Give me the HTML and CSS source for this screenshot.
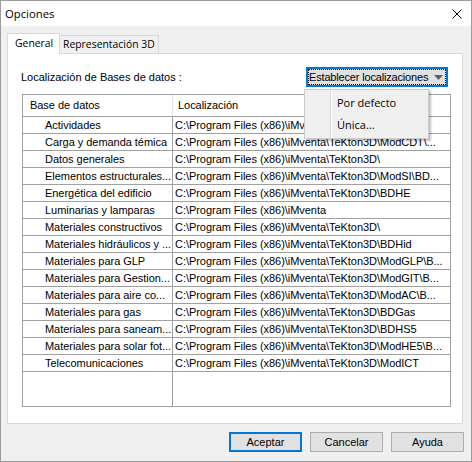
FILE: index.html
```html
<!DOCTYPE html>
<html>
<head>
<meta charset="utf-8">
<title>Opciones</title>
<link rel="stylesheet" href="styles.css">
</head>
<body>
<div class="window">
  <div class="titlebar">
    <span class="title">Opciones</span>
    <svg class="close" width="10" height="10" viewBox="0 0 10 10"><path d="M0.5 0.5 L9.5 9.5 M9.5 0.5 L0.5 9.5" stroke="#000" stroke-width="1" fill="none"/></svg>
  </div>
  <div class="client">
    <div class="tabs">
      <div class="tab active">General</div>
      <div class="tab">Representación 3D</div>
    </div>
    <div class="panel">
      <div class="toprow">
        <span class="label">Localización de Bases de datos :</span>
        <div class="dropbtn">
          <div class="focus">
            <span class="droptext">Establecer localizaciones</span>
            <svg class="arrow" width="9" height="5" viewBox="0 0 9 5"><path d="M0 0 H9 L4.5 5 Z" fill="#606060"/></svg>
          </div>
        </div>
      </div>
      <div class="list">
        <div class="row head"><div class="c1">Base de datos</div><div class="c2">Localización</div></div>
        <div class="row"><div class="c1">Actividades</div><div class="c2">C:\Program Files (x86)\iMventa</div></div>
        <div class="row"><div class="c1">Carga y demanda témica</div><div class="c2">C:\Program Files (x86)\iMventa\TeKton3D\ModCDT\...</div></div>
        <div class="row"><div class="c1">Datos generales</div><div class="c2">C:\Program Files (x86)\iMventa\TeKton3D\</div></div>
        <div class="row"><div class="c1">Elementos estructurales...</div><div class="c2">C:\Program Files (x86)\iMventa\TeKton3D\ModSI\BD...</div></div>
        <div class="row"><div class="c1">Energética del edificio</div><div class="c2">C:\Program Files (x86)\iMventa\TeKton3D\BDHE</div></div>
        <div class="row"><div class="c1">Luminarias y lamparas</div><div class="c2">C:\Program Files (x86)\iMventa</div></div>
        <div class="row"><div class="c1">Materiales constructivos</div><div class="c2">C:\Program Files (x86)\iMventa\TeKton3D\</div></div>
        <div class="row"><div class="c1">Materiales hidráulicos y ...</div><div class="c2">C:\Program Files (x86)\iMventa\TeKton3D\BDHid</div></div>
        <div class="row"><div class="c1">Materiales para GLP</div><div class="c2">C:\Program Files (x86)\iMventa\TeKton3D\ModGLP\B...</div></div>
        <div class="row"><div class="c1">Materiales para Gestion...</div><div class="c2">C:\Program Files (x86)\iMventa\TeKton3D\ModGIT\B...</div></div>
        <div class="row"><div class="c1">Materiales para aire co...</div><div class="c2">C:\Program Files (x86)\iMventa\TeKton3D\ModAC\B...</div></div>
        <div class="row"><div class="c1">Materiales para gas</div><div class="c2">C:\Program Files (x86)\iMventa\TeKton3D\BDGas</div></div>
        <div class="row"><div class="c1">Materiales para saneam...</div><div class="c2">C:\Program Files (x86)\iMventa\TeKton3D\BDHS5</div></div>
        <div class="row"><div class="c1">Materiales para solar fot...</div><div class="c2">C:\Program Files (x86)\iMventa\TeKton3D\ModHE5\B...</div></div>
        <div class="row"><div class="c1">Telecomunicaciones</div><div class="c2">C:\Program Files (x86)\iMventa\TeKton3D\ModICT</div></div>
        <div class="filler"><div class="c1"></div><div class="c2"></div></div>
      </div>
      <div class="menu">
        <div class="menu-item">Por defecto</div>
        <div class="menu-item">Única...</div>
      </div>
    </div>
    <div class="buttons">
      <div class="btn default">Aceptar</div>
      <div class="btn">Cancelar</div>
      <div class="btn">Ayuda</div>
    </div>
  </div>
</div>
</body>
</html>
```
FILE: styles.css
```css
html, body {
  margin: 0;
  padding: 0;
  background: #f0f0f0;
}

.window {
  width: 472px;
  height: 462px;
  box-sizing: border-box;
  border: 1px solid #9b9b9b;
  display: flex;
  flex-direction: column;
  background: #f0f0f0;
  font-family: "Liberation Sans", Arial, sans-serif;
  font-size: 11px;
  color: #000;
}

.titlebar {
  flex: none;
  height: 25px;
  background: #fff;
  display: flex;
  align-items: center;
  justify-content: space-between;
  padding: 0 9px 0 4px;
}

.title {
  font-family: "Open Sans", "Noto Sans", sans-serif;
  font-size: 11.3px;
  color: #000;
}

.close {
  display: block;
}

.client {
  flex: 1;
  display: flex;
  flex-direction: column;
  padding: 7px 8px 0 6px;
}

.tabs {
  display: flex;
  align-items: flex-end;
  height: 21px;
}

.tab {
  box-sizing: border-box;
  height: 18px;
  margin-bottom: 1px;
  margin-left: -1px;
  width: 100px;
  border: 1px solid #d9d9d9;
  border-bottom: none;
  background: #f0f0f0;
  padding-left: 3px;
  font-family: "Open Sans", "Noto Sans", sans-serif;
  font-size: 10.4px;
  line-height: 16px;
  white-space: nowrap;
}

.tab.active {
  height: 21px;
  margin-bottom: 0;
  margin-left: 0;
  width: 53px;
  background: #fff;
  padding-left: 7px;
  line-height: 19px;
  position: relative;
  z-index: 1;
}

.panel {
  height: 371px;
  box-sizing: border-box;
  border: 1px solid #d9d9d9;
  background: #fff;
  margin-top: -1px;
  position: relative;
  display: flex;
  flex-direction: column;
  padding: 13px 11px 0 14px;
}

.toprow {
  display: flex;
  align-items: center;
  justify-content: space-between;
  height: 20px;
}

.label {
  margin-left: -1px;
}

.dropbtn {
  width: 142px;
  height: 20px;
  box-sizing: border-box;
  border: 2px solid #0078d7;
  background: #e1e1e1;
  margin-right: 3px;
}

.focus {
  height: 100%;
  box-sizing: border-box;
  border: 1px dotted #000;
  display: flex;
  align-items: center;
  justify-content: space-between;
  padding: 0 2px 0 0;
  white-space: nowrap;
}

.droptext {
  letter-spacing: -0.17px;
}

.arrow {
  display: block;
}

.list {
  margin-top: 7px;
  height: 313px;
  box-sizing: border-box;
  border: 1px solid #a0a0a0;
  display: flex;
  flex-direction: column;
  letter-spacing: -0.04px;
}

.row {
  display: flex;
  flex: none;
  height: 17px;
  box-sizing: border-box;
  border-bottom: 1px solid #a0a0a0;
  line-height: 16px;
}

.row.head {
  height: 22px;
  line-height: 21px;
}

.c1 {
  width: 150px;
  flex: none;
  box-sizing: border-box;
  border-right: 1px solid #a0a0a0;
  padding-left: 22px;
  white-space: nowrap;
  overflow: hidden;
}

.c2 {
  flex: 1;
  padding-left: 2px;
  white-space: nowrap;
  overflow: hidden;
}

.head .c1 {
  padding-left: 7px;
  border-right-color: #e5e5e5;
}

.head .c2 {
  padding-left: 5px;
}

.filler {
  flex: 1;
  display: flex;
}

.menu {
  position: absolute;
  left: 296px;
  top: 35px;
  width: 125px;
  height: 50px;
  box-sizing: border-box;
  border: 1px solid #cccccc;
  background: linear-gradient(to right, transparent 25px, #d7d7d7 25px, #d7d7d7 26px, #ffffff 26px, #ffffff 27px, transparent 27px), #f0f0f0;
  box-shadow: 2px 2px 2px rgba(0, 0, 0, 0.25);
  padding: 2px 0;
  font-family: "Open Sans", "Noto Sans", sans-serif;
  font-size: 11px;
}

.menu-item {
  height: 22px;
  line-height: 22px;
  padding-left: 32px;
}

.buttons {
  display: flex;
  justify-content: flex-end;
  gap: 8px;
  margin-top: 8px;
  margin-right: -1px;
}

.btn {
  width: 73px;
  height: 20px;
  box-sizing: border-box;
  border: 1px solid #adadad;
  background: #e1e1e1;
  display: flex;
  align-items: center;
  justify-content: center;
}

.btn.default {
  border: 2px solid #0078d7;
}
```
